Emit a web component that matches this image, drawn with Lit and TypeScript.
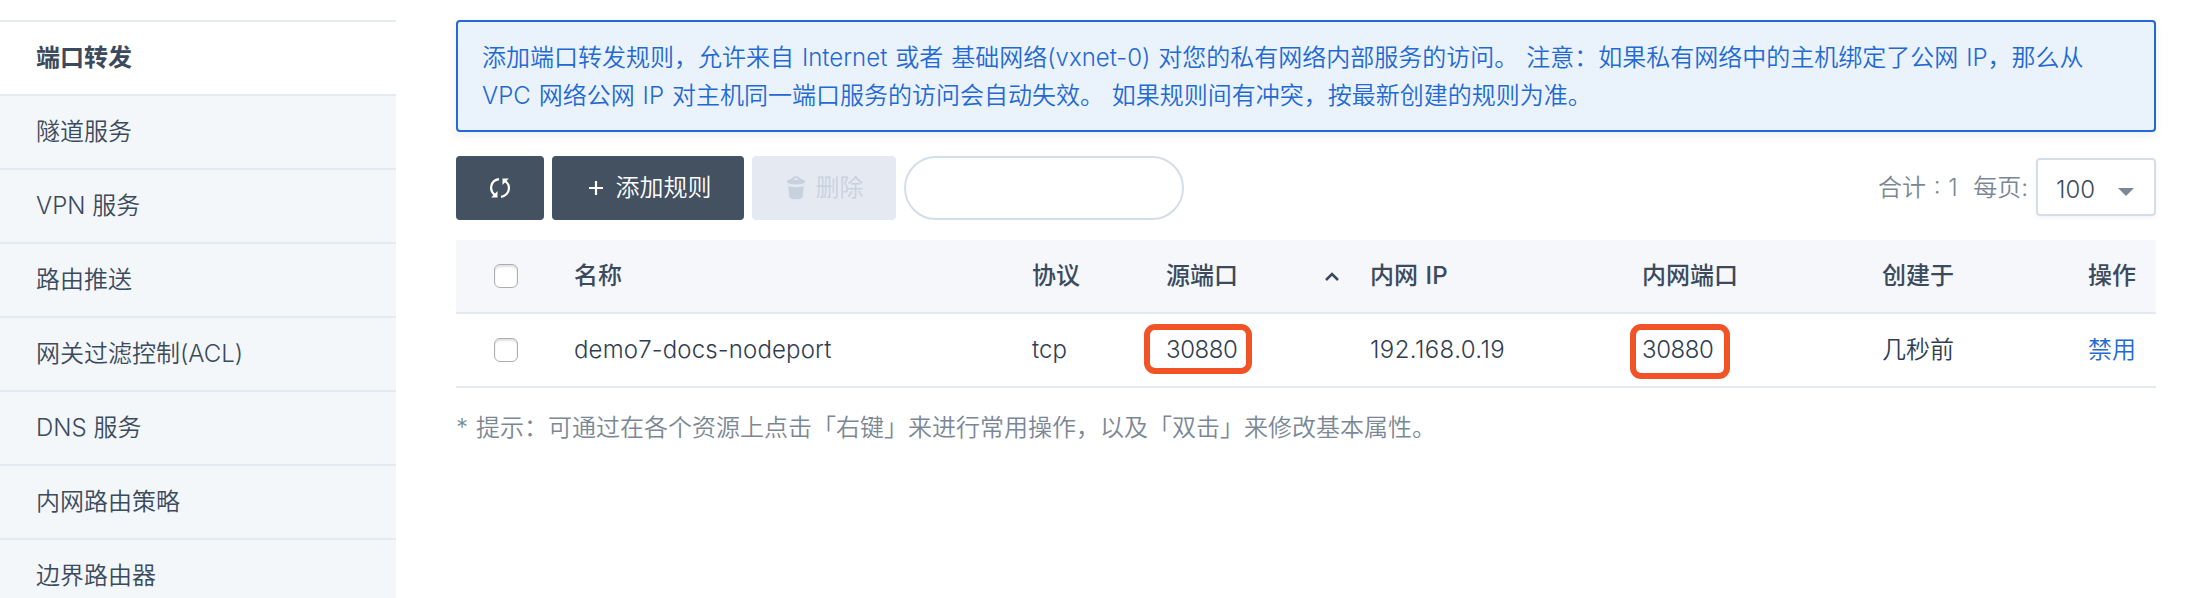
import { LitElement, html, css } from "lit";
import { customElement } from "lit/decorators.js";
import { classMap } from "lit/directives/class-map.js";

const MENU = [
  "端口转发",
  "隧道服务",
  "VPN 服务",
  "路由推送",
  "网关过滤控制(ACL)",
  "DNS 服务",
  "内网路由策略",
  "边界路由器",
];

@customElement("app-root")
export class AppRoot extends LitElement {
  static styles = css`
    :host {
      display: flex;
      align-items: flex-start;
      width: 2210px;
      height: 598px;
      overflow: hidden;
      box-sizing: border-box;
      background: #fff;
      color: #3b4a5c;
      font: 350 24px/36px Inter, "Noto Sans CJK SC", sans-serif;
      word-spacing: 1.2px;
    }
    * {
      box-sizing: border-box;
    }
    .menu {
      flex: none;
      width: 396px;
      margin: 20px 60px 0 0;
      padding: 0;
      list-style: none;
      word-spacing: 0;
    }
    .item {
      height: 74px;
      padding: 18px 36px 0;
      border-top: 2px solid #e5e9f0;
      background: #f3f7fa;
      white-space: nowrap;
    }
    .item.active {
      background: #fff;
      font-weight: 600;
    }
    .main {
      width: 1700px;
      padding-top: 20px;
    }
    .alert {
      height: 112px;
      padding: 17px 24px 15px;
      border: 2px solid #2469d3;
      border-radius: 4px;
      background: #eaf3fc;
      color: #2469d3;
      line-height: 38px;
      white-space: nowrap;
      box-shadow: 0 4px 8px rgba(36, 46, 66, 0.08);
    }
    .toolbar {
      display: flex;
      gap: 8px;
      height: 64px;
      margin: 24px 0 20px;
    }
    .btn {
      display: flex;
      align-items: center;
      justify-content: center;
      height: 64px;
      padding: 0;
      border: 0;
      border-radius: 4px;
      background: #435161;
      color: #fff;
      font: inherit;
    }
    .refresh { width: 88px; }
    .add { width: 192px; padding-left: 4px; gap: 13px; }
    .remove { width: 144px; padding-left: 2px; gap: 11px; background: #e5eaf2; color: #c8d1de; }
    .search {
      width: 280px;
      height: 64px;
      border: 2px solid #d5dee7;
      border-radius: 32px;
      background: #fff;
    }
    .pager {
      display: flex;
      align-items: center;
      margin-left: auto;
      color: #7b8794;
      white-space: pre;
      word-spacing: 1px;
    }
    .select {
      display: flex;
      align-items: center;
      justify-content: space-between;
      width: 120px;
      height: 58px;
      margin: 0 0 2px 8px;
      padding: 5px 20px 0 18px;
      border: 2px solid #d5dee7;
      border-radius: 4px;
      box-shadow: 0 2px 4px rgba(36, 46, 66, 0.05);
      color: #3b4a5c;
    }
    .caret { margin-top: 5px; }
    .row {
      display: grid;
      grid-template-columns: 118px 458px 134px 204px 272px 240px 206px 68px;
      align-items: center;
      height: 74px;
      border-bottom: 2px solid #e4e9ef;
      color: #303d50;
      white-space: nowrap;
    }
    .head {
      background: #f5f7fb;
      color: #3b4a5c;
      font-weight: 500;
    }
    .check {
      width: 24px;
      height: 24px;
      margin-left: 38px;
      border: 1px solid #adadad;
      border-radius: 6px;
      background: #fff;
      box-shadow: inset 0 2px 2px rgba(0, 0, 0, 0.12);
    }
    .sorted {
      display: flex;
      align-items: center;
      justify-content: space-between;
      padding-right: 31px;
    }
    .name { letter-spacing: 0.15px; }
    .ip { letter-spacing: 0.4px; }
    .marked {
      position: relative;
      letter-spacing: -0.4px;
    }
    .mark {
      position: absolute;
      border: 6px solid #f15226;
      border-radius: 11px;
    }
    .source { left: -22px; top: -8px; width: 108px; height: 50px; }
    .target { left: -12px; top: -8px; width: 100px; height: 55px; }
    .link { color: #2469d3; }
    .tip { margin: 22px 0 0; color: #7b8794; white-space: nowrap; }
  `;

  render() {
    return html`
      <ul class="menu">
        ${MENU.map((m, i) => html`<li class=${classMap({ item: true, active: i === 0 })}>${m}</li>`)}
      </ul>
      <main class="main">
        <div class="alert">
          添加端口转发规则，允许来自 Internet 或者 基础网络(vxnet-0) 对您的私有网络内部服务的访问。 注意：如果私有网络中的主机绑定了公网 IP，那么从<br />VPC 网络公网 IP 对主机同一端口服务的访问会自动失效。 如果规则间有冲突，按最新创建的规则为准。
        </div>
        <div class="toolbar">
          <button class="btn refresh">
            <svg width="20" height="20" viewBox="0 0 20 20" fill="none" stroke="#fff" stroke-width="2.2">
              <path d="M9 1.200C.5 2.500-1.300 12 4.600 17" />
              <path d="M11 18.800C19.500 17.500 21.300 8 15.400 3" />
              <path d="M1.200 19.500H7.500V13z M18.800.5H12.500V7z" fill="#fff" stroke="none" />
            </svg>
          </button>
          <button class="btn add">
            <svg width="14" height="14" viewBox="0 0 14 14" stroke="#fff" stroke-width="2.200"><path d="M7 0V14M0 7H14" /></svg>
            <span>添加规则</span>
          </button>
          <button class="btn remove">
            <svg width="18" height="24" viewBox="0 0 18 24" fill="#c8d1de">
              <path fill-rule="evenodd" d="M0 6C0 4.300 2 3.500 4.500 2.800C6 .9 7.500.3 9 .3S12 .9 13.500 2.800C16 3.500 18 4.300 18 6C18 9.300 0 9.300 0 6ZM6.300 3.800H11.700C11 2.400 10 1.900 9 1.900S7 2.400 6.300 3.800Z" />
              <path d="M1.200 10C5 11.300 13 11.300 16.800 10L15.800 20.500C15.500 24.300 2.500 24.300 2.200 20.500Z" />
            </svg>
            <span>删除</span>
          </button>
          <div class="search"></div>
          <div class="pager">
            <span>合计 : 1  每页:</span>
            <div class="select">
              <span>100</span>
              <svg class="caret" width="16" height="8" viewBox="0 0 16 8"><path d="M0 0H16L8 8Z" fill="#7b8794" /></svg>
            </div>
          </div>
        </div>
        <div class="row head">
          <span class="check"></span>
          <span>名称</span>
          <span>协议</span>
          <span class="sorted">源端口
            <svg width="14" height="9" viewBox="0 0 14 9" fill="none" stroke="#3b4a5c" stroke-width="2.600"><path d="M1 8L7 2L13 8" /></svg>
          </span>
          <span>内网 IP</span>
          <span>内网端口</span>
          <span>创建于</span>
          <span>操作</span>
        </div>
        <div class="row">
          <span class="check"></span>
          <span class="name">demo7-docs-nodeport</span>
          <span>tcp</span>
          <span class="marked">30880<i class="mark source"></i></span>
          <span class="ip">192.168.0.19</span>
          <span class="marked">30880<i class="mark target"></i></span>
          <span>几秒前</span>
          <span class="link">禁用</span>
        </div>
        <p class="tip">* 提示：可通过在各个资源上点击「右键」来进行常用操作，以及「双击」来修改基本属性。</p>
      </main>
    `;
  }
}
